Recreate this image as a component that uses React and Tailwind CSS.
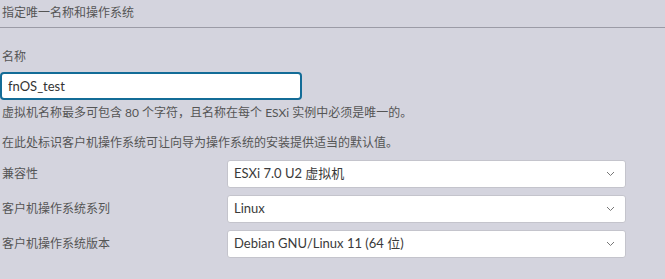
import { useState } from 'react'

const font = { fontFamily: 'Lato, "Noto Sans CJK SC", sans-serif' }

function Chevron() {
  return (
    <svg width="9" height="6" viewBox="0 0 9 6" fill="none" stroke="#777" strokeWidth="1" className="shrink-0">
      <path d="M1 1l3.5 3.5L8 1" />
    </svg>
  )
}

function Select({ value }) {
  return (
    <div className="flex h-[28px] w-[399px] items-center justify-between rounded-[3px] border border-[#c4c4cc] bg-white pl-[6px] pr-[10px] text-[13px] text-[#3a3a3a]">
      <span>{value}</span>
      <Chevron />
    </div>
  )
}

export default function App() {
  const [name, setName] = useState('fnOS_test')

  const rows = [
    ['兼容性', 'ESXi 7.0 U2 虚拟机'],
    ['客户机操作系统系列', 'Linux'],
    ['客户机操作系统版本', 'Debian GNU/Linux 11 (64 位)'],
  ]

  return (
    <div className="h-[279px] w-[665px] overflow-hidden bg-[#d4d4de] text-[12px] text-[#555]" style={font}>
      <div className="flex h-[28px] items-center border-b border-[#9b9ba6] pl-[2px] pb-[1px]">
        指定唯一名称和操作系统
      </div>

      <div className="pl-[2px] pt-[21px] leading-[16px]">名称</div>

      <div className="pt-[7px]">
        <input
          value={name}
          onChange={(e) => setName(e.target.value)}
          className="h-[28px] w-[302px] rounded-[4px] border-2 border-[#136c97] bg-white px-[6px] text-[13px] text-[#333] outline-none"
          style={font}
        />
      </div>

      <div className="pl-[2px] pt-[5px] leading-[16px]">
        虚拟机名称最多可包含 80 个字符，且名称在每个 ESXi 实例中必须是唯一的。
      </div>

      <div className="pl-[2px] pt-[14px] leading-[16px]">
        在此处标识客户机操作系统可让向导为操作系统的安装提供适当的默认值。
      </div>

      <div className="flex flex-col gap-[7px] pt-[9px]">
        {rows.map(([label, value]) => (
          <div key={label} className="flex items-center">
            <div className="w-[227px] pl-[2px]">{label}</div>
            <Select value={value} />
          </div>
        ))}
      </div>
    </div>
  )
}
